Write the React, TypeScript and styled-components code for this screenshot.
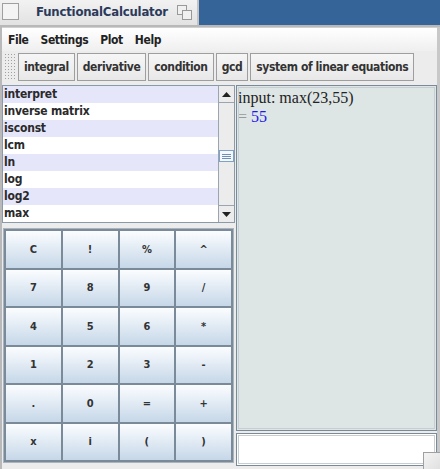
import styled, { createGlobalStyle } from 'styled-components';

const GlobalStyle = createGlobalStyle`
  html, body {
    margin: 0;
    padding: 0;
    background: #d6d6d6;
  }
  body {
    font-family: "DejaVu Sans", "Liberation Sans", sans-serif;
  }
`;

const ui = `"DejaVu Sans Condensed", "DejaVu Sans", sans-serif`;

const Frame = styled.div`
  width: 440px;
  height: 469px;
  display: flex;
  flex-direction: column;
  overflow: hidden;
  background: #e9e9e9;
`;

const TitleBar = styled.div`
  height: 25px;
  display: flex;
  background: #346498;
  border-bottom: 2px solid #b8b8b8;
`;

const TitleTab = styled.div`
  width: 199px;
  display: flex;
  align-items: center;
  background: linear-gradient(#f2f2f2, #e2e2e2);
  border-right: 2px solid #c4c4c4;
  padding: 0 4px 0 2px;
  box-sizing: border-box;
`;

const TitleBox = styled.div`
  width: 15px;
  height: 15px;
  border: 1px solid #a0a0a0;
  background: #f4f4f4;
  margin-top: -2px;
`;

const TitleText = styled.div`
  flex: 1;
  text-align: center;
  padding-left: 8px;
  font-family: ${ui};
  font-weight: bold;
  font-size: 13px;
  letter-spacing: -0.2px;
  color: #2b3a5a;
  margin-top: -2px;
`;

const Body = styled.div`
  flex: 1;
  display: flex;
  flex-direction: column;
  border-left: 2px solid #b9b9b9;
  border-right: 3px solid #c8c8c8;
  background: #ececec;
`;

const MenuBar = styled.div`
  height: 23px;
  display: flex;
  align-items: center;
  gap: 12px;
  padding: 0 0 0 6px;
  background: linear-gradient(#ffffff, #efefef);
  border-top: 1px solid #d0d0d0;
`;

const MenuItem = styled.span`
  font-family: ${ui};
  font-weight: bold;
  font-size: 12px;
  letter-spacing: -0.4px;
  color: #222;
`;

const ToolBar = styled.div`
  height: 31px;
  display: flex;
  align-items: center;
  gap: 2px;
  padding: 0 0 0 2px;
  background: #ececec;
`;

const Grip = styled.div`
  flex-shrink: 0;
  width: 12px;
  height: 27px;
  background-image: radial-gradient(#a0a0a0 0.7px, transparent 0.8px);
  background-size: 3px 3px;
`;

const ToolButton = styled.div`
  flex-shrink: 0;
  height: 28px;
  box-sizing: border-box;
  padding: 0 5px;
  display: flex;
  align-items: center;
  white-space: nowrap;
  border: 1px solid #9e9e9e;
  background: linear-gradient(#f6f6f6, #e8e8e8);
  font-family: ${ui};
  font-weight: bold;
  font-size: 12px;
  letter-spacing: -0.4px;
  color: #333;
`;

const Main = styled.div`
  flex: 1;
  display: grid;
  grid-template-columns: 233px 1fr;
  gap: 1px;
  padding-top: 3px;
`;

const LeftPane = styled.div`
  display: flex;
  flex-direction: column;
  gap: 5px;
`;

const ListBox = styled.div`
  height: 136px;
  display: flex;
  border: 1px solid #8a9aa8;
  background: #fff;
`;

const List = styled.div`
  flex: 1;
  display: flex;
  flex-direction: column;
`;

const Row = styled.div<{ $alt: boolean }>`
  height: 17px;
  line-height: 17px;
  padding-left: 1px;
  background: ${(p) => (p.$alt ? '#e6e6fa' : '#ffffff')};
  font-family: ${ui};
  font-weight: bold;
  font-size: 12px;
  letter-spacing: -0.2px;
  color: #2a2a2a;
`;

const ScrollBar = styled.div`
  width: 15px;
  display: flex;
  flex-direction: column;
  border-left: 1px solid #9aa5b0;
  background: #ececec;
`;

const ScrollArrow = styled.div`
  height: 16px;
  display: flex;
  align-items: center;
  justify-content: center;
  border-bottom: 1px solid #9aa5b0;
  &:last-child {
    border-bottom: none;
    border-top: 1px solid #9aa5b0;
  }
`;

const Track = styled.div`
  flex: 1;
  display: flex;
  flex-direction: column;
  padding-top: 47px;
`;

const Thumb = styled.div`
  height: 12px;
  box-sizing: border-box;
  border: 1px solid #7ea2c8;
  background: #f4f7fb;
  display: flex;
  align-items: center;
  justify-content: center;
`;

const Keypad = styled.div`
  flex: 1;
  margin: 0 1px 6px 1px;
  display: grid;
  grid-template-columns: repeat(4, 1fr);
  grid-template-rows: repeat(6, 1fr);
  gap: 2px;
  padding: 2px;
  background: #7b8a98;
  border: 1px solid #aab4be;
`;

const Key = styled.div`
  display: flex;
  align-items: center;
  justify-content: center;
  background: linear-gradient(#fbfdff, #c6d7e8);
  font-family: ${ui};
  font-weight: bold;
  font-size: 11px;
  color: #333;
`;

const RightPane = styled.div`
  display: flex;
  flex-direction: column;
  gap: 2px;
  padding-bottom: 3px;
`;

const Output = styled.div`
  flex: 1;
  background: #dee5e5;
  border: 1px solid #7b8a98;
  outline: 1px solid #c6cdd3;
  outline-offset: -3px;
  padding: 2px 1px;
  font-family: "Liberation Serif", "DejaVu Serif", serif;
  font-size: 16px;
  color: #222;
`;

const Line = styled.div`
  line-height: 19px;
`;

const Eq = styled.span`
  color: #999;
`;

const Result = styled.span`
  color: #1a1aee;
`;

const InputField = styled.div`
  height: 31px;
  position: relative;
  background: #fff;
  border: 1px solid #7b8a98;
  outline: 1px solid #c6cdd3;
  outline-offset: -3px;
`;

const ResizeCorner = styled.div`
  position: absolute;
  right: -4px;
  bottom: -4px;
  width: 16px;
  height: 16px;
  background: linear-gradient(135deg, #f4f4f4, #e0e0e0);
  border-left: 1px solid #a0a0a0;
  border-top: 1px solid #a0a0a0;
`;

const functions = ['interpret', 'inverse matrix', 'isconst', 'lcm', 'ln', 'log', 'log2', 'max'];
const tools = ['integral', 'derivative', 'condition', 'gcd', 'system of linear equations'];
const keys = ['C', '!', '%', '^', '7', '8', '9', '/', '4', '5', '6', '*', '1', '2', '3', '-', '.', '0', '=', '+', 'x', 'i', '(', ')'];

const Arrow = ({ up }: { up: boolean }) => (
  <svg width="9" height="5" viewBox="0 0 9 5">
    <polygon points={up ? '0,5 9,5 4.5,0' : '0,0 9,0 4.5,5'} fill="#222" />
  </svg>
);

const RestoreIcon = () => (
  <svg width="16" height="16" viewBox="0 0 16 16">
    <rect x="0.5" y="0.5" width="9" height="9" fill="#f0f0f0" stroke="#999" />
    <rect x="5.5" y="5.5" width="9" height="9" fill="#f0f0f0" stroke="#999" />
  </svg>
);

export default function App() {
  return (
    <>
      <GlobalStyle />
      <Frame>
        <TitleBar>
          <TitleTab>
            <TitleBox />
            <TitleText>FunctionalCalculator</TitleText>
            <RestoreIcon />
          </TitleTab>
        </TitleBar>
        <Body>
          <MenuBar>
            <MenuItem>File</MenuItem>
            <MenuItem>Settings</MenuItem>
            <MenuItem>Plot</MenuItem>
            <MenuItem>Help</MenuItem>
          </MenuBar>
          <ToolBar>
            <Grip />
            {tools.map((t) => (
              <ToolButton key={t}>{t}</ToolButton>
            ))}
          </ToolBar>
          <Main>
            <LeftPane>
              <ListBox>
                <List>
                  {functions.map((f, i) => (
                    <Row key={f} $alt={i % 2 === 0}>
                      {f}
                    </Row>
                  ))}
                </List>
                <ScrollBar>
                  <ScrollArrow>
                    <Arrow up />
                  </ScrollArrow>
                  <Track>
                    <Thumb>
                      <svg width="9" height="5" viewBox="0 0 9 5">
                        <path d="M0 0.5H9M0 2.5H9M0 4.5H9" stroke="#6f8fb4" />
                      </svg>
                    </Thumb>
                  </Track>
                  <ScrollArrow>
                    <Arrow up={false} />
                  </ScrollArrow>
                </ScrollBar>
              </ListBox>
              <Keypad>
                {keys.map((k) => (
                  <Key key={k}>{k}</Key>
                ))}
              </Keypad>
            </LeftPane>
            <RightPane>
              <Output>
                <Line>input: max(23,55)</Line>
                <Line>
                  <Eq>= </Eq>
                  <Result>55</Result>
                </Line>
              </Output>
              <InputField>
                <ResizeCorner />
              </InputField>
            </RightPane>
          </Main>
        </Body>
      </Frame>
    </>
  );
}
